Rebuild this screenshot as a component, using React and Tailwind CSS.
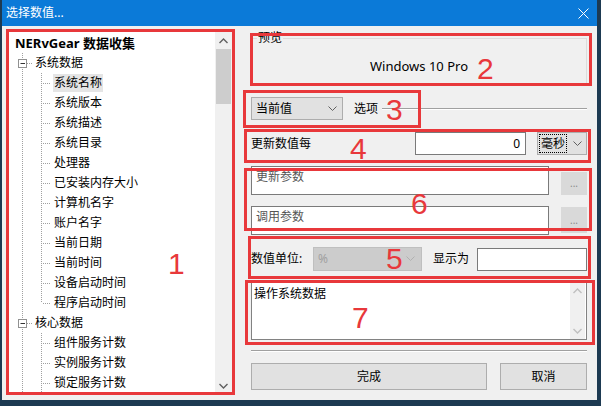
import React from 'react';

const FONT = { fontFamily: '"Noto Sans", "Noto Sans CJK SC", sans-serif' };

const tree = [
  { level: 0, label: 'NERvGear 数据收集' },
  { level: 1, label: '系统数据' },
  { level: 2, label: '系统名称', selected: true },
  { level: 2, label: '系统版本' },
  { level: 2, label: '系统描述' },
  { level: 2, label: '系统目录' },
  { level: 2, label: '处理器' },
  { level: 2, label: '已安装内存大小' },
  { level: 2, label: '计算机名字' },
  { level: 2, label: '账户名字' },
  { level: 2, label: '当前日期' },
  { level: 2, label: '当前时间' },
  { level: 2, label: '设备启动时间' },
  { level: 2, label: '程序启动时间', last: true },
  { level: 1, label: '核心数据' },
  { level: 2, label: '组件服务计数' },
  { level: 2, label: '实例服务计数' },
  { level: 2, label: '锁定服务计数' },
  // next row is scrolled out of view, only its connector lines peek in
  { level: 2, label: '' },
];

const DOT = '#a0a0a0';

function Gutter({ level, last }) {
  if (level === 1) {
    return (
      <svg width="25" height="20" className="shrink-0">
        <line x1="13.5" y1="0" x2="13.5" y2="20" stroke={DOT} strokeDasharray="1 1" />
        <line x1="18" y1="10.5" x2="24" y2="10.5" stroke={DOT} strokeDasharray="1 1" />
        <rect x="9.5" y="6.5" width="8" height="8" fill="white" stroke="#919191" />
        <line x1="11.5" y1="10.5" x2="16" y2="10.5" stroke="#333" />
      </svg>
    );
  }
  return (
    <svg width="44" height="20" className="shrink-0">
      <line x1="13.5" y1="0" x2="13.5" y2="20" stroke={DOT} strokeDasharray="1 1" />
      <line x1="32.5" y1="0" x2="32.5" y2={last ? 10 : 20} stroke={DOT} strokeDasharray="1 1" />
      <line x1="34" y1="10.5" x2="42" y2="10.5" stroke={DOT} strokeDasharray="1 1" />
    </svg>
  );
}

function Chevron({ color = '#606060' }) {
  return (
    <svg width="9" height="6" viewBox="0 0 9 6" className="shrink-0">
      <path d="M0.5 0.5 L4.5 4.5 L8.5 0.5" fill="none" stroke={color} strokeWidth="1" />
    </svg>
  );
}

function ScrollArrow({ up, color = '#606060' }) {
  return (
    <svg width="9" height="6" viewBox="0 0 9 6">
      <path d={up ? 'M0.5 5 L4.5 1 L8.5 5' : 'M0.5 1 L4.5 5 L8.5 1'} fill="none" stroke={color} strokeWidth="1.4" />
    </svg>
  );
}

function TreePanel() {
  return (
    <div className="relative flex w-[225px] h-[364px] border border-[#828790] bg-white overflow-hidden">
      <div className="flex-1 pt-[1px] overflow-hidden">
        {tree.map((r, i) => (
          <div key={i} className="flex items-center h-[20px] text-[12px] leading-[20px] whitespace-nowrap">
            {r.level === 0 ? (
              <span className="pl-[6px] text-[13px] font-bold text-black">{r.label}</span>
            ) : (
              <>
                <Gutter level={r.level} last={r.last} />
                {r.label && (
                  <span className={`px-[1px] leading-[18px] text-black ${r.selected ? 'bg-[#e5e5e5]' : ''}`}>{r.label}</span>
                )}
              </>
            )}
          </div>
        ))}
      </div>
      <div className="w-[17px] bg-[#f0f0f0] flex flex-col items-center">
        <div className="h-[17px] flex items-center justify-center"><ScrollArrow up /></div>
        <div className="w-[15px] h-[55px] bg-[#cdcdcd]" />
        <div className="flex-1" />
        <div className="h-[17px] flex items-center justify-center"><ScrollArrow /></div>
      </div>
    </div>
  );
}

function RightPane() {
  return (
    <div className="w-[336px] ml-[18px] flex flex-col text-[12px] text-black">
      {/* preview group */}
      <div className="relative mt-[7px] h-[46px] border border-[#dcdcdc] flex items-center justify-center pt-[11px]">
        <span className="absolute left-[5px] -top-[9px] bg-[#f0f0f0] px-[1px] leading-[16px]">预览</span>
        <span className="text-[13px]">Windows 10 Pro</span>
      </div>

      {/* value mode */}
      <div className="mt-[13px] h-[23px] flex items-center">
        <div className="w-[92px] h-[23px] bg-[#e1e1e1] border border-[#adadad] flex items-center pl-[4px] pr-[5px]">
          <span className="flex-1">当前值</span>
          <Chevron />
        </div>
        <span className="ml-[11px]">选项</span>
        <div className="flex-1 ml-[4px] border-t border-[#a0a0a0] border-b border-b-white" />
      </div>

      {/* update interval */}
      <div className="mt-[12px] h-[23px] flex items-center">
        <span className="flex-1">更新数值每</span>
        <div className="w-[111px] h-[23px] bg-white border border-[#7a7a7a] flex items-center justify-end pr-[5px]">0</div>
        <div className="ml-[11px] w-[50px] h-[23px] bg-[#e1e1e1] border border-[#adadad] flex items-center pl-[1px] pr-[4px]">
          <span className="border border-dotted border-black px-[1px] leading-[17px]">毫秒</span>
          <span className="flex-1" />
          <Chevron />
        </div>
      </div>

      {/* params */}
      <div className="mt-[11px] h-[29px] flex items-start">
        <div className="w-[298px] h-[29px] bg-white border border-[#7a7a7a] px-[4px] leading-[20px] text-[#555]">更新参数</div>
        <div className="ml-[12px] mt-[6px] w-[26px] h-[23px] bg-[#d9d9d9] flex items-center justify-center text-[#8a8a8a] text-[10px]">...</div>
      </div>
      <div className="mt-[11px] h-[29px] flex items-start">
        <div className="w-[298px] h-[29px] bg-white border border-[#7a7a7a] px-[4px] leading-[20px] text-[#555]">调用参数</div>
        <div className="ml-[12px] mt-[1px] w-[26px] h-[26px] bg-[#d9d9d9] flex items-center justify-center text-[#8a8a8a] text-[10px]">...</div>
      </div>

      {/* unit */}
      <div className="mt-[12px] h-[24px] flex items-center">
        <span className="w-[62px]">数值单位:</span>
        <div className="w-[109px] h-[24px] bg-[#cccccc] border border-[#bfbfbf] flex items-center pl-[4px] pr-[6px]">
          <span className="flex-1 text-[#a0a0a0]">%</span>
          <Chevron color="#b0b0b0" />
        </div>
        <span className="ml-[11px] flex-1">显示为</span>
        <div className="w-[110px] h-[23px] bg-white border border-[#7a7a7a]" />
      </div>

      {/* description */}
      <div className="mt-[11px] h-[58px] bg-white border border-[#828282] flex">
        <div className="flex-1 px-[2px] pt-[2px] leading-[18px]">操作系统数据</div>
        <div className="w-[15px] mr-[1px] bg-[#f0f0f0] flex flex-col items-center justify-between py-[5px]">
          <ScrollArrow up color="#c0c0c0" />
          <ScrollArrow color="#c0c0c0" />
        </div>
      </div>

      <div className="mt-[10px] border-t border-[#a0a0a0] border-b border-b-white" />

      <div className="mt-[11px] flex gap-[13px]">
        <button className="w-[236px] h-[27px] bg-[#e1e1e1] border border-[#adadad] text-[12px]">完成</button>
        <button className="flex-1 h-[27px] bg-[#e1e1e1] border border-[#adadad] text-[12px]">取消</button>
      </div>
    </div>
  );
}

export default function App() {
  return (
    <div className="relative w-[601px] h-[406px] bg-[#1d3a52] overflow-hidden" style={FONT}>
      <div className="ml-[2px] w-[595px] h-[400px] bg-[#f0f0f0] flex flex-col">
        <div className="h-[26px] bg-[#0b7ad8] flex items-center pl-[4px] pr-[8px] text-white text-[12px]">
          <span className="flex-1">选择数值...</span>
          <svg width="11" height="11" viewBox="0 0 11 11">
            <path d="M0.5 0.5 L10.5 10.5 M10.5 0.5 L0.5 10.5" stroke="white" strokeWidth="1" />
          </svg>
        </div>
        <div className="flex pt-[5px] pl-[6px]">
          <TreePanel />
          <RightPane />
        </div>
      </div>

      {/* annotation overlay */}
      <div className="absolute inset-0 pointer-events-none text-[#e8383b] text-[30px] leading-none" style={{ fontFamily: '"Liberation Sans", sans-serif' }}>
        <div className="absolute left-[6px] top-[29px] w-[229px] h-[366px] border-[3px] border-[#e8383b]" />
        <div className="absolute left-[250px] top-[33px] w-[342px] h-[53px] border-[3px] border-[#e8383b]" />
        <div className="absolute left-[243px] top-[90px] w-[178px] h-[38px] border-[3px] border-[#e8383b]" />
        <div className="absolute left-[244px] top-[129px] w-[347px] h-[34px] border-[3px] border-[#e8383b]" />
        <div className="absolute left-[244px] top-[168px] w-[348px] h-[63px] border-[3px] border-[#e8383b]" />
        <div className="absolute left-[248px] top-[236px] w-[343px] h-[43px] border-[3px] border-[#e8383b]" />
        <div className="absolute left-[245px] top-[280px] w-[350px] h-[65px] border-[3px] border-[#e8383b]" />
        <span className="absolute left-[168px] top-[249px]">1</span>
        <span className="absolute left-[477px] top-[54px]">2</span>
        <span className="absolute left-[386px] top-[95px]">3</span>
        <span className="absolute left-[350px] top-[134px]">4</span>
        <span className="absolute left-[386px] top-[244px]">5</span>
        <span className="absolute left-[411px] top-[189px]">6</span>
        <span className="absolute left-[352px] top-[303px]">7</span>
      </div>
    </div>
  );
}
